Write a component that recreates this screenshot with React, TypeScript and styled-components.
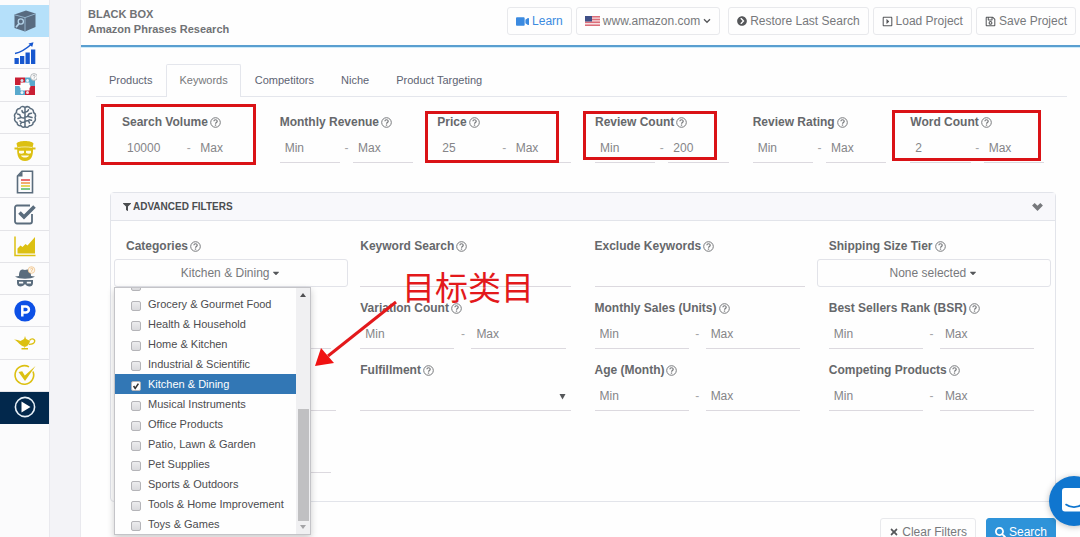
import React from 'react';
import styled, { createGlobalStyle, css } from 'styled-components';
import {
  FaVideo,
  FaChevronCircleRight,
  FaRegCaretSquareRight,
  FaRegSave,
  FaFilter,
  FaCaretDown,
  FaTimes,
  FaSearch,
} from 'react-icons/fa';

const GlobalStyle = createGlobalStyle`
  * { box-sizing: border-box; }
  body {
    margin: 0;
    background: #fefefe;
    color: #6b6d70;
    font: 12px/16px "Liberation Sans", Arial, sans-serif;
  }
  button, input, select { font: inherit; color: inherit; }
`;

const Page = styled.div`
  display: flex;
  height: 100vh;
`;

/* ---------- Side navigation ---------- */

const Sidebar = styled.nav`
  flex: 0 0 49px;
  padding-top: 5px;
  background: #fbfbfc;
`;

const SideList = styled.div`
  display: flex;
  flex-direction: column;
  height: 419px;
`;

const SideLink = styled.a<{ $tone?: 'active' | 'dark' }>`
  flex: 1;
  display: flex;
  align-items: center;
  justify-content: center;
  border-bottom: 1px solid #e4e4e8;
  background: #fcfcfd;
  ${(p) => p.$tone === 'active' && css`background: #b5e0fa; border-color: #b5e0fa;`}
  ${(p) => p.$tone === 'dark' && css`background: #02284c; border-color: #02284c;`}
`;

const Gutter = styled.div`
  flex: 0 0 31px;
  background: #f3f3f7;
  border-left: 1px solid #e9e9ee;
`;

/* ---------- Header ---------- */

const Main = styled.main`
  flex: 1;
  min-width: 0;
  overflow-x: hidden;
  overflow-y: auto;
  scrollbar-width: none;
  border-left: 1px solid #e9e9ee;
`;

const Header = styled.header`
  display: flex;
  justify-content: space-between;
  height: 47px;
  padding: 7px 4px 0 7px;
  border-bottom: 2px solid #5a9fd0;
  box-shadow: 0 1px 0 #cdebfa;
`;

const Title = styled.h1`
  margin: 0;
  color: #707275;
  font-size: 11px;
  line-height: 15px;
  white-space: nowrap;
`;

const Toolbar = styled.div`
  display: flex;
  gap: 4px;
`;

const Button = styled.button<{ $variant?: 'link' | 'primary'; $spaced?: boolean }>`
  display: flex;
  align-items: center;
  justify-content: center;
  gap: 3px;
  height: 28px;
  padding: 0 8px;
  margin-right: ${(p) => (p.$spaced ? 4 : 0)}px;
  border: 1px solid #e8e9ec;
  border-radius: 3px;
  background: #fefefe;
  color: #77797c;
  white-space: nowrap;
  svg { color: #55575a; }
  ${(p) => p.$variant === 'link' && css`&, svg { color: #3b8ae0; }`}
  ${(p) => p.$variant === 'primary' && css`
    background: #2e93d9;
    border-color: #2e93d9;
    &, svg { color: #fff; }
  `}
`;

/* ---------- Tabs ---------- */

const Tabs = styled.div`
  display: flex;
  gap: 1px;
  margin: 17px 13px 0 15px;
  border-bottom: 1px solid #e4e6ec;
`;

const Tab = styled.a<{ $active?: boolean }>`
  height: 32px;
  padding: 0 12px;
  border: 1px solid transparent;
  border-bottom: 0;
  border-radius: 2px 2px 0 0;
  color: #5d6372;
  font-size: 11px;
  line-height: 30px;
  text-decoration: none;
  ${(p) => p.$active && css`
    height: 33px;
    margin-bottom: -1px;
    background: #fefefe;
    border-color: #e4e6ec;
    color: #77797c;
  `}
`;

/* ---------- Filters ---------- */

const Content = styled.div`
  padding: 17px 24px 0 29px;
`;

const QuickFilters = styled.div`
  display: grid;
  grid-template-columns: repeat(6, 1fr);
`;

const Cell = styled.div`
  position: relative;
  padding: 0 12px;
`;

const FieldLabel = styled.label`
  display: flex;
  align-items: center;
  gap: 2px;
  height: 16px;
  margin-bottom: 3px;
  color: #66686b;
  font-weight: bold;
  white-space: nowrap;
`;

const RangeRow = styled.div<{ $wide?: boolean }>`
  display: grid;
  grid-template-columns: 1fr ${(p) => (p.$wide ? 17 : 13)}px 1fr;
  margin-right: ${(p) => (p.$wide ? 5 : 0)}px;
  align-items: center;
  color: #a5a5a8;
  text-align: center;
`;

const TextInput = styled.input`
  display: block;
  width: 100%;
  min-width: 0;
  height: 30px;
  padding: 0 5px;
  border: 0;
  border-bottom: 1px solid #dcd9df;
  background: transparent;
  color: #858588;
  outline: 0;
  &::placeholder { color: #858588; opacity: 1; }
`;

const SelectWrap = styled.div`
  display: flex;
  align-items: center;
  svg { flex: none; margin: 0 5px 0 -12px; pointer-events: none; }
`;

const Select = styled.select`
  width: 100%;
  height: 30px;
  border: 0;
  border-bottom: 1px solid #dcd9df;
  background: transparent;
  appearance: none;
`;

const PickerButton = styled(Button)`
  width: calc(100% + 24px);
  margin: 5px -12px 0;
  border-color: #e2e3e9;
  gap: 2px;
`;

const Panel = styled.section`
  margin-top: 29px;
  border: 1px solid #e2e4ea;
  border-radius: 4px;
`;

const PanelHeader = styled.h2`
  display: flex;
  align-items: center;
  gap: 2px;
  height: 28px;
  margin: 0;
  padding: 0 12px;
  border-bottom: 1px solid #e2e4ea;
  background: #f8f8fb;
  color: #4b4d50;
  font-size: 10px;
  & > :last-child { margin-left: auto; color: #77797c; }
`;

const PanelBody = styled.div`
  position: relative;
  display: grid;
  grid-template-columns: repeat(4, 1fr);
  row-gap: 13px;
  padding: 17px 4px 28px 3px;
`;

const Actions = styled.div`
  display: flex;
  justify-content: flex-end;
  gap: 10px;
  padding: 16px 0;
`;

const HiddenLabelSpace = styled.div`
  height: 19px;
`;

/* ---------- Category menu ---------- */

const Menu = styled.div`
  position: absolute;
  z-index: 2;
  top: 49px;
  left: 0;
  display: flex;
  width: 197px;
  height: 248px;
  border: 1px solid #c4c4c8;
  background: #fefefe;
  box-shadow: 0 3px 7px rgba(0, 0, 0, 0.2);
`;

const MenuList = styled.div`
  flex: 1;
  display: flex;
  flex-direction: column;
  justify-content: flex-end;
  overflow: hidden;
`;

const MenuItem = styled.label<{ $selected?: boolean }>`
  flex: none;
  display: flex;
  align-items: center;
  gap: 7px;
  height: 20px;
  padding-left: 16px;
  color: #4c4c4f;
  font-size: 11px;
  white-space: nowrap;
  ${(p) => p.$selected && css`background: #3277b5; color: #fff;`}
`;

const Checkbox = styled.input`
  appearance: none;
  width: 10px;
  height: 10px;
  margin: 3px 0 0;
  border: 1px solid #b4b4b8;
  border-radius: 2px;
  background: linear-gradient(#ececee, #dadadd);
  &:checked {
    background: #fff url("data:image/svg+xml,%3Csvg xmlns='http://www.w3.org/2000/svg' viewBox='0 0 10 10'%3E%3Cpath d='M2 5l2 3 4-6' fill='none' stroke='%23333' stroke-width='2'/%3E%3C/svg%3E");
  }
`;

const ScrollTrack = styled.div`
  display: flex;
  flex-direction: column;
  align-items: center;
  justify-content: space-between;
  width: 14px;
  padding: 5px 1px;
  background: #f0f0f2;
`;

const ScrollThumb = styled.div`
  width: 11px;
  height: 112px;
  margin: auto 0 4px;
  background: #c0c0c2;
`;

/* ---------- Annotations and chat ---------- */

const Mark = styled.div<{ $left: number; $top: number; $width: number; $height: number }>`
  position: absolute;
  left: ${(p) => p.$left}px;
  top: ${(p) => p.$top}px;
  width: ${(p) => p.$width}px;
  height: ${(p) => p.$height}px;
  border: 3px solid #da1216;
  pointer-events: none;
`;

const Callout = styled.div`
  position: absolute;
  z-index: 3;
  top: 41px;
  left: 291px;
  color: #e3191b;
  font: 400 33px/48px "Noto Sans CJK SC", sans-serif;
  white-space: nowrap;
  pointer-events: none;
`;

const Arrow = styled.svg`
  position: absolute;
  z-index: 3;
  top: 77px;
  left: 203px;
  pointer-events: none;
`;

const ChatButton = styled.button`
  position: fixed;
  right: -19px;
  bottom: 11px;
  width: 50px;
  height: 50px;
  padding: 0;
  border: 0;
  border-radius: 50%;
  background: #1076cf;
  box-shadow: 0 1px 6px rgba(0, 0, 0, 0.25);
  svg { display: block; margin: auto; }
`;

/* ---------- Drawings ---------- */

const Help = () => (
  <svg width="11" height="11" viewBox="0 0 22 22" fill="none" stroke="#77797c" strokeWidth="2">
    <circle cx="11" cy="11" r="9.6" />
    <path d="M7.8 8.600c0-4.200 6.600-4 6.600-.2 0 2.600-3.300 2.500-3.300 5" strokeWidth="2.400" />
    <path d="M11 15v2.400" strokeWidth="2.600" />
  </svg>
);

const Chevron = ({ size, weight }: { size: number; weight: number }) => (
  <svg width={size} height={size} viewBox="0 0 12 12" fill="none" stroke="currentColor" strokeWidth={weight}>
    <path d="m1.500 3.500 4.500 4.500 4.500-4.500" />
  </svg>
);

const Flag = () => (
  <svg width="15" height="10" viewBox="0 0 15 10">
    <rect width="15" height="10" fill="#f6dfe2" />
    <path d="M0 .7h15M0 3.500h15M0 6.300h15M0 9.200h15" stroke="#dc6e79" strokeWidth="1.400" />
    <rect width="7" height="5.500" fill="#3f4f86" />
  </svg>
);

const Icon = ({ children }: { children: React.ReactNode }) => (
  <svg width="24" height="24" viewBox="0 0 24 24" fill="none">
    {children}
  </svg>
);

const gold = '#dcc012';
const slate = '#5a6c7d';

const CubeIcon = () => (
  <Icon>
    <path d="M1.500 5.500 13 1.500l9.500 3V18L12 22.500 1.500 19z" fill="#586b80" />
    <path d="M1.500 5.800 12 8.600l10.500-3.800M12 8.600v13.600" stroke="#93b4cc" strokeWidth="1" />
    <circle cx="7.800" cy="12.500" r="2.600" stroke="#b5d5ea" strokeWidth="1.300" />
    <path d="m6 14.600-3 3.600" stroke="#b5d5ea" strokeWidth="1.700" />
  </Icon>
);

const BarsIcon = () => (
  <Icon>
    <path d="M1.500 17h4.300v6H1.500zM7 15h4.300v8H7zM12.500 11.500h4.300V23h-4.300zM18 8.500h4.300V23H18z" fill="#1757cf" />
    <path d="M2 12.500c6-1.200 11-4.500 16-9" stroke="#1757cf" strokeWidth="1.500" />
    <path d="m15.500 2.600 5-1.400-1.300 4.800z" fill="#1757cf" />
  </Icon>
);

const PuzzleIcon = () => (
  <Icon>
    <path d="M2 4.500h10V12H2z" fill="#c91f34" />
    <path d="M12 4.500h10V13H12z" fill="#59a9cd" />
    <path d="M2 13h10v9H2z" fill="#59a9cd" />
    <path d="M12 13h10v9H12z" fill="#c91f34" />
    <path d="M7.500 9.500h9v2.200a1.800 1.800 0 0 1 0 3.200v2.600h-9v-2.600a1.800 1.800 0 0 1 0-3.200z" fill="#fdfdfd" />
    <circle cx="9" cy="7.500" r="1.500" fill="#cfe6f1" />
    <circle cx="14.500" cy="7.500" r="1.500" fill="#e9f4f9" />
    <circle cx="9" cy="19.500" r="1.500" fill="#e9f4f9" />
    <circle cx="14.500" cy="19.500" r="1.500" fill="#f7dadd" />
    <circle cx="21" cy="4" r="3.400" fill="#fdfdfd" stroke="#a3a9af" strokeWidth=".8" />
    <path d="M20 3.300c0-1.500 2.300-1.300 2.100 0 0 .8-1 .8-1 1.600m0 .6v.6" stroke="#8b9096" strokeWidth=".7" />
  </Icon>
);

const BrainIcon = () => (
  <Icon>
    <g stroke={slate} strokeWidth="1.500" strokeLinecap="round" strokeLinejoin="round">
      <path d="M12 2.500C10 .8 7.200 1.500 6.800 3.600 4.500 3.600 3 5.500 3.600 7.500 1.500 8.500 1 11 2 12.500c-1 2 0 4.300 2 5 0 2.300 2 3.700 4 3.200 1 1.800 3 2 4 .8 1.500 1.200 3.500.9 4.200-.7 2.200.3 4-1.200 3.900-3.300 2-.8 2.800-3 1.900-5 1-2 .3-4-1.500-5 .3-2.200-1.200-3.800-3.300-3.900C16.500 1.500 14 1 12 2.500z" />
      <path d="M12 3v18.500M12 8c-2 0-3-1-3-2.500M12 13c-3.500.5-5-1-5.200-3.200L4.500 9M8 12.500l-3 1M12 17.500c-2-.6-4-.2-4.500 1.500M7 16l1.200 1" />
      <path d="M12 7c2 .3 3-.5 3.500-2.200M12 12c3 .2 3.500-1.500 4-3.200l2.500-.6M15 11.500l4 1M12 16.500c2-1.500 4-1 4.500 1.500M16 14.800l2.500.5" />
    </g>
  </Icon>
);

const CapIcon = () => (
  <Icon>
    <path d="M3.500 5.500C5 2 19 2 20.500 5.500l-1 4H22.500v2h-2.500c.2 6-1.500 11.500-8 11.500S4 17.500 4.200 11.500H1.500v-2h3z" fill={gold} />
    <path d="M5 9.500c5-.8 9-.8 14 0" stroke="#fdf9dc" strokeWidth=".7" />
    <path d="M6 12.800h5V15c-2 1-4 .8-5 0zM13 12.800h5V15c-1 .8-3 1-5 0zM8 17.500h8c-1 2.800-7 2.800-8 0z" fill="#fffce8" />
  </Icon>
);

const DocIcon = () => (
  <Icon>
    <path d="M9 1.200h10.500v21.600h-15V6z" stroke={slate} strokeWidth="1.600" />
    <path d="M9.500 1.200V6.500h-5z" fill={slate} />
    <path d="M8 10h9" stroke="#e76060" strokeWidth="1.800" />
    <path d="M8 13h9" stroke="#f1a55e" strokeWidth="1.800" />
    <path d="M8 16h9" stroke="#e5d34e" strokeWidth="1.800" />
    <path d="M8 19h9" stroke="#6cc57a" strokeWidth="1.800" />
  </Icon>
);

const CheckSquareIcon = () => (
  <Icon>
    <path d="M19 12v7.500a2 2 0 0 1-2 2H4a2 2 0 0 1-2-2V5.500a2 2 0 0 1 2-2h13" stroke={slate} strokeWidth="1.800" />
    <path d="m6.500 10.500 4.500 4.500L21.500 4.500" stroke={slate} strokeWidth="3.600" />
  </Icon>
);

const AreaIcon = () => (
  <Icon>
    <path d="M2 2.500v19h20.500" stroke={gold} strokeWidth="1.500" />
    <path d="M4.500 19.500v-5l3-3 2 1.500 3-3 2 1.500 7.500-8.500v16.500z" fill={gold} />
  </Icon>
);

const SpyIcon = () => (
  <Icon>
    <path d="M6 10c0-6 2.500-7.500 6-6 3.500-1.500 6 0 6 6z" fill={slate} />
    <path d="M2 10.500c6-1.500 14-1.500 20 0-4 3-16 3-20 0z" fill={slate} />
    <path d="M4 14h16v3c0 4.500-6 4.500-8 1-2 3.500-8 3.500-8-1z" fill={slate} />
    <path d="M6 15.800h4.200v1.700H6zM13.800 15.800H18v1.700h-4.200z" fill="#fcfcfd" />
    <circle cx="18.500" cy="4" r="3.300" fill="#fdf6ec" stroke="#f0c48c" strokeWidth=".8" />
    <path d="M17.600 3.300c0-1.500 2.200-1.300 2 0 0 .8-1 .8-1 1.600m0 .5v.6" stroke="#eba95a" strokeWidth=".7" />
  </Icon>
);

const ParkIcon = () => (
  <Icon>
    <circle cx="12" cy="12" r="10.600" fill="#0d50e6" />
    <path d="M9.300 17.500V7.600h3.600a3 3 0 0 1 0 6H9.300" stroke="#fff" strokeWidth="2.500" />
  </Icon>
);

const LampIcon = () => (
  <Icon>
    <path d="M1 8.500c3 0 4.500 1 6.500 1.500 2-1 3-1.500 3.800-2.500l.7-2.500.8 2.500c1 1.200 2.500 1.500 4.200 2.500-1 4-3 5.500-5 5.800v1.200h3v1.500H8.500V17h3v-1.200C7 15.200 5 10 1 8.500z" fill={gold} />
    <path d="M16.500 9.500c2.500-3 6-1 5 1.500-.7 2-3 2.200-5.500 2.500" stroke={gold} strokeWidth="1.300" />
  </Icon>
);

const CheckCircleIcon = () => (
  <Icon>
    <path d="M20 8.500A9.300 9.300 0 1 1 16 3.900" stroke={gold} strokeWidth="1.600" />
    <path d="M5.500 9 9.200 8.200l2.600 4.300L22.500 3 12 18z" fill={gold} />
  </Icon>
);

const PlayIcon = () => (
  <Icon>
    <circle cx="12" cy="12" r="9.600" stroke="#e8f1f8" strokeWidth="1.600" />
    <path d="m8.500 6.600 9 5.400-9 5.400z" fill="#fff" />
  </Icon>
);

const sideItems: { name: string; icon: React.ReactNode; tone?: 'active' | 'dark' }[] = [
  { name: 'cube', icon: <CubeIcon />, tone: 'active' },
  { name: 'bars', icon: <BarsIcon /> },
  { name: 'puzzle', icon: <PuzzleIcon /> },
  { name: 'brain', icon: <BrainIcon /> },
  { name: 'cap', icon: <CapIcon /> },
  { name: 'doc', icon: <DocIcon /> },
  { name: 'check', icon: <CheckSquareIcon /> },
  { name: 'area', icon: <AreaIcon /> },
  { name: 'spy', icon: <SpyIcon /> },
  { name: 'park', icon: <ParkIcon /> },
  { name: 'lamp', icon: <LampIcon /> },
  { name: 'round', icon: <CheckCircleIcon /> },
  { name: 'play', icon: <PlayIcon />, tone: 'dark' },
];

/* ---------- Composite fields ---------- */

type RangeProps = { id: string; label?: string; min?: string; max?: string; wide?: boolean; blank?: boolean };

const Range = ({ id, label, min, max, wide, blank }: RangeProps) => (
  <>
    {label ? (
      <FieldLabel htmlFor={id}>
        {label} <Help />
      </FieldLabel>
    ) : (
      <HiddenLabelSpace />
    )}
    <RangeRow $wide={wide}>
      <TextInput id={id} defaultValue={min} placeholder={blank ? undefined : 'Min'} aria-label={label ? undefined : 'Min'} />
      <span>{blank ? '' : '-'}</span>
      <TextInput defaultValue={max} placeholder={blank ? undefined : 'Max'} aria-label="Max" />
    </RangeRow>
  </>
);

const quick = [
  { id: 'volume', label: 'Search Volume', min: '10000', mark: [-9, -10, 155, 61] },
  { id: 'revenue', label: 'Monthly Revenue' },
  { id: 'price', label: 'Price', min: '25', mark: [0, -3, 134, 52] },
  { id: 'reviews', label: 'Review Count', max: '200', mark: [0, -3, 134, 49] },
  { id: 'rating', label: 'Review Rating' },
  { id: 'words', label: 'Word Count', min: '2', mark: [-6, -4, 149, 51] },
];

const categories = [
  'Electronics',
  'Grocery & Gourmet Food',
  'Health & Household',
  'Home & Kitchen',
  'Industrial & Scientific',
  'Kitchen & Dining',
  'Musical Instruments',
  'Office Products',
  'Patio, Lawn & Garden',
  'Pet Supplies',
  'Sports & Outdoors',
  'Tools & Home Improvement',
  'Toys & Games',
];

export default function App() {
  return (
    <Page>
      <GlobalStyle />
      <Sidebar>
        <SideList>
          {sideItems.map((item) => (
            <SideLink key={item.name} href="#" aria-label={item.name} $tone={item.tone}>
              {item.icon}
            </SideLink>
          ))}
        </SideList>
      </Sidebar>
      <Gutter />
      <Main>
        <Header>
          <Title>
            BLACK BOX
            <br />
            Amazon Phrases Research
          </Title>
          <Toolbar>
            <Button $variant="link"><FaVideo size={13} />Learn</Button>
            <Button $spaced><Flag />www.amazon.com<Chevron size={8} weight={2} /></Button>
            <Button><FaChevronCircleRight size={10} />Restore Last Search</Button>
            <Button><FaRegCaretSquareRight size={11} />Load Project</Button>
            <Button><FaRegSave size={11} />Save Project</Button>
          </Toolbar>
        </Header>

        <Tabs>
          <Tab href="#">Products</Tab>
          <Tab href="#" $active>Keywords</Tab>
          <Tab href="#">Competitors</Tab>
          <Tab href="#">Niche</Tab>
          <Tab href="#">Product Targeting</Tab>
        </Tabs>

        <Content>
          <QuickFilters>
            {quick.map(({ mark, ...field }) => (
              <Cell key={field.id}>
                <Range {...field} />
                {mark && <Mark $left={mark[0]} $top={mark[1]} $width={mark[2]} $height={mark[3]} />}
              </Cell>
            ))}
          </QuickFilters>

          <Panel>
            <PanelHeader>
              <FaFilter size={8} />
              ADVANCED FILTERS
              <Chevron size={11} weight={4} />
            </PanelHeader>
            <PanelBody>
              <Cell>
                <FieldLabel htmlFor="categories">Categories <Help /></FieldLabel>
                <PickerButton id="categories">Kitchen &amp; Dining<FaCaretDown size={10} /></PickerButton>
                <Menu>
                  <MenuList>
                    {categories.map((name) => (
                      <MenuItem key={name} $selected={name === 'Kitchen & Dining'}>
                        <Checkbox type="checkbox" defaultChecked={name === 'Kitchen & Dining'} />
                        {name}
                      </MenuItem>
                    ))}
                  </MenuList>
                  <ScrollTrack>
                    <svg width="6" height="4" viewBox="0 0 6 4"><path d="M0 4l3-4 3 4z" fill="#505053" /></svg>
                    <ScrollThumb />
                    <svg width="6" height="4" viewBox="0 0 6 4"><path d="M0 0l3 4 3-4z" fill="#a3a3a6" /></svg>
                  </ScrollTrack>
                </Menu>
              </Cell>
              <Cell>
                <FieldLabel htmlFor="keyword">Keyword Search <Help /></FieldLabel>
                <TextInput id="keyword" />
              </Cell>
              <Cell>
                <FieldLabel htmlFor="exclude">Exclude Keywords <Help /></FieldLabel>
                <TextInput id="exclude" />
              </Cell>
              <Cell>
                <FieldLabel htmlFor="tier">Shipping Size Tier <Help /></FieldLabel>
                <PickerButton id="tier">None selected<FaCaretDown size={10} /></PickerButton>
              </Cell>

              <Cell><Range id="range-a" wide blank /></Cell>
              <Cell><Range id="variation" label="Variation Count" wide /></Cell>
              <Cell><Range id="sales" label="Monthly Sales (Units)" wide /></Cell>
              <Cell><Range id="bsr" label="Best Sellers Rank (BSR)" wide /></Cell>

              <Cell>
                <HiddenLabelSpace />
                <TextInput aria-label="Text" />
              </Cell>
              <Cell>
                <FieldLabel htmlFor="fulfillment">Fulfillment <Help /></FieldLabel>
                <SelectWrap>
                  <Select id="fulfillment" />
                  <svg width="7" height="7" viewBox="0 0 7 7"><path d="M.5 1h6L3.500 6.500z" fill="#55575a" /></svg>
                </SelectWrap>
              </Cell>
              <Cell><Range id="age" label="Age (Month)" wide /></Cell>
              <Cell><Range id="competing" label="Competing Products" wide /></Cell>

              <Cell><Range id="range-b" wide blank /></Cell>

              <Arrow width="85" height="72" viewBox="0 0 85 72">
                <path d="M82 4 14 58" stroke="#e3191b" strokeWidth="3" />
                <path d="M1 68 7 50l13 15z" fill="#f01212" />
              </Arrow>
              <Callout>目标类目</Callout>
            </PanelBody>
          </Panel>

          <Actions>
            <Button><FaTimes size={10} />Clear Filters</Button>
            <Button $variant="primary"><FaSearch size={11} />Search</Button>
          </Actions>
        </Content>
      </Main>
      <ChatButton aria-label="Chat">
        <svg width="24" height="26" viewBox="0 0 24 26">
          <path d="M3 0h18a3 3 0 0 1 3 3v23l-5-2.500H3a3 3 0 0 1-3-3V3a3 3 0 0 1 3-3z" fill="#fff" />
          <path d="M4 16.500c4.500 3.500 11.500 3.500 16 0" stroke="#1076cf" strokeWidth="1.600" fill="none" strokeLinecap="round" />
        </svg>
      </ChatButton>
    </Page>
  );
}
